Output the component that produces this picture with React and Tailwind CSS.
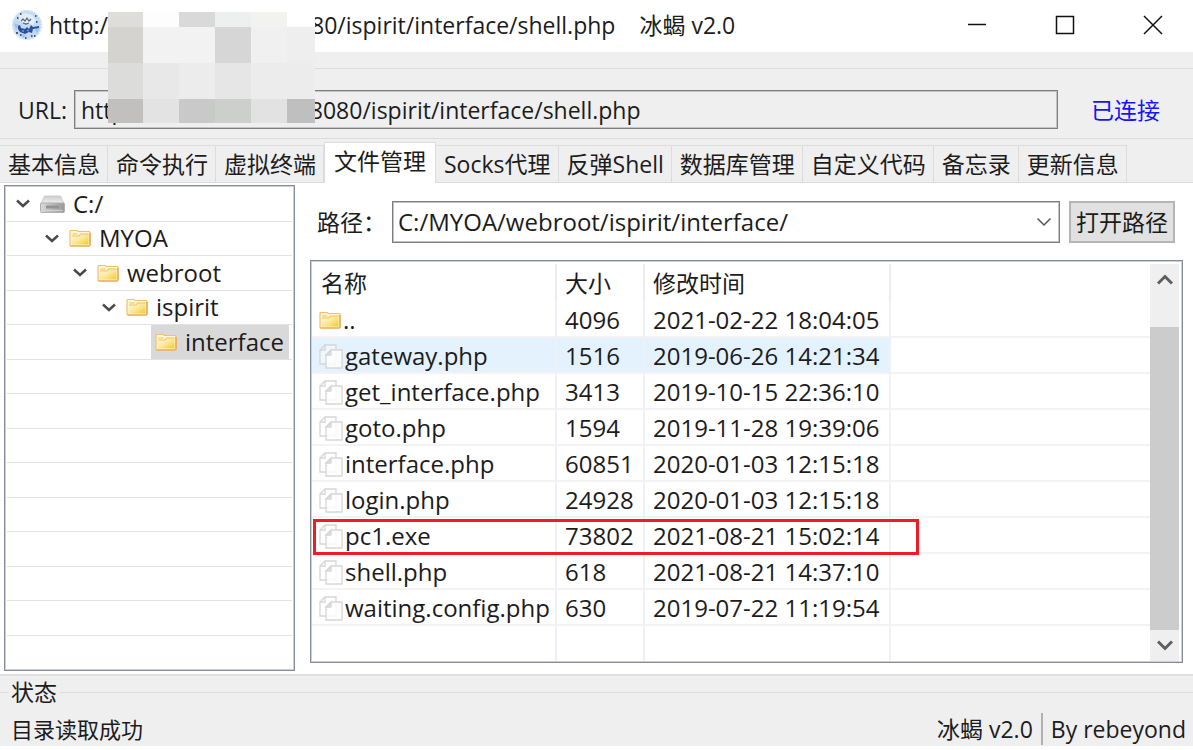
import React, { useState } from 'react';

const tabs = ['基本信息', '命令执行', '虚拟终端', '文件管理', 'Socks代理', '反弹Shell', '数据库管理', '自定义代码', '备忘录', '更新信息'];

const tree = [
  { name: 'C:/', pad: 'pl-[9px]', drive: true },
  { name: 'MYOA', pad: 'pl-[38px]' },
  { name: 'webroot', pad: 'pl-[66px]' },
  { name: 'ispirit', pad: 'pl-[95px]' },
  { name: 'interface', pad: 'pl-[144px]', selected: true },
  ...Array.from({ length: 9 }, () => null),
];

const files = [
  { name: '..', size: '4096', time: '2021-02-22 18:04:05', folder: true },
  { name: 'gateway.php', size: '1516', time: '2019-06-26 14:21:34', hover: true },
  { name: 'get_interface.php', size: '3413', time: '2019-10-15 22:36:10' },
  { name: 'goto.php', size: '1594', time: '2019-11-28 19:39:06' },
  { name: 'interface.php', size: '60851', time: '2020-01-03 12:15:18' },
  { name: 'login.php', size: '24928', time: '2020-01-03 12:15:18' },
  { name: 'pc1.exe', size: '73802', time: '2021-08-21 15:02:14', marked: true },
  { name: 'shell.php', size: '618', time: '2021-08-21 14:37:10' },
  { name: 'waiting.config.php', size: '630', time: '2019-07-22 11:19:54' },
];

const mosaic = [
  'bg-[#dedddb]', 'bg-[#fdfdfd]', 'bg-[#d9d9d9]', 'bg-[#edf0ee]', 'bg-[#f2f2f0]', 'bg-[#ffffff]',
  'bg-[#d4d3d0]', 'bg-[#f2f2f2]', 'bg-[#f2f2f2]', 'bg-[#d6d6d6]', 'bg-[#f0f0f0]', 'bg-[#eeeeee]',
  'bg-[#dcdcda]', 'bg-[#e8e8e8]', 'bg-[#ececec]', 'bg-[#e6e6e6]', 'bg-[#ececec]', 'bg-[#ececec]',
  'bg-[#c1c0be]', 'bg-[#e3e3e3]', 'bg-[#c9c9c9]', 'bg-[#cdcfcd]', 'bg-[#e2e2e2]', 'bg-[#bfbfbf]',
];

function FolderIcon() {
  return (
    <svg className="shrink-0" width="22" height="18" viewBox="0 0 22 18" aria-hidden="true">
      <defs>
        <linearGradient id="folder" x1="0" y1="0" x2="1" y2="1">
          <stop offset="0" stopColor="#fffbe6" />
          <stop offset="0.5" stopColor="#fbe89c" />
          <stop offset="1" stopColor="#efcb2c" />
        </linearGradient>
      </defs>
      <path d="M1 16V2.500Q1 1.500 2 1.500H8L9.500 2.500H20Q21 2.500 21 3.500V16Q21 17 20 17H2Q1 17 1 16Z" fill="#fff6d6" stroke="#f3c06a" strokeWidth="1.200" />
      <path d="M2.500 15.500V7.500H10L11.500 5H19.500V15.500Z" fill="url(#folder)" />
      <path d="M3.500 5H8.500M3 7H10L11.500 5H19.500" fill="none" stroke="#ecc35c" strokeWidth="1.200" />
      <path d="M1.500 17H20.500M21 4V16.500" stroke="#e6a04c" strokeWidth="1.200" />
    </svg>
  );
}

function DriveIcon() {
  return (
    <svg className="shrink-0" width="25" height="18" viewBox="0 0 25 18" aria-hidden="true">
      <defs>
        <linearGradient id="driveTop" x1="0" y1="0" x2="0" y2="1">
          <stop offset="0" stopColor="#cfcfcf" />
          <stop offset="1" stopColor="#efefef" />
        </linearGradient>
        <linearGradient id="driveFront" x1="0" y1="0" x2="1" y2="0">
          <stop offset="0" stopColor="#dadada" />
          <stop offset="1" stopColor="#989898" />
        </linearGradient>
      </defs>
      <path d="M4.500 1H20.500L24 8.500H1Z" fill="url(#driveTop)" stroke="#c4c4c4" strokeWidth="0.800" />
      <rect x="0.500" y="8" width="24" height="9.500" rx="1" fill="url(#driveFront)" stroke="#b0b0b0" />
      <rect x="6" y="10.500" width="13" height="3" fill="#939393" />
      <path d="M2 15.500H23" stroke="#cfcfcf" strokeWidth="1" />
    </svg>
  );
}

function FileIcon() {
  return (
    <svg className="shrink-0" width="24" height="25" viewBox="0 0 24 25" fill="#fff" fillOpacity="0.400" stroke="#d6d6d6" strokeWidth="1.300" aria-hidden="true">
      <path d="M1 20V6H6V1H17V20Z" />
      <path d="M1 6L6 1" />
      <path d="M7 24V11L12 6H23V24Z" fill="#fff" fillOpacity="0.800" />
      <path d="M7 11H12V6Z" fill="#dedede" fillOpacity="1" />
    </svg>
  );
}

function TreeChevron() {
  return (
    <svg className="mr-[10px] shrink-0" width="14" height="9" viewBox="0 0 14 9" fill="none" stroke="#4a4a4a" strokeWidth="2.400" aria-hidden="true">
      <path d="M1 1.500L7 7L13 1.500" />
    </svg>
  );
}

function AppLogo() {
  return (
    <svg className="shrink-0" width="32" height="32" viewBox="0 0 32 32" aria-hidden="true">
      <circle cx="16" cy="16" r="15" fill="#c3daf2" />
      <circle cx="16" cy="16" r="14.500" fill="none" stroke="#e4eff9" strokeWidth="1.500" strokeDasharray="2 1.500" />
      <path d="M8 6L14 4L21 6L25 11L22 16L14 14L8 12Z" fill="#e2edf8" />
      <path d="M3 14L8 16L5 21ZM24 20L29 18L26 25ZM10 25L15 26L12 29Z" fill="#9fc1e8" />
      <path d="M7 17L9 16L10 19L14 20L16 18L18 20L20 16L22 18L28 17V19L22 20L21 24L18 23L14 25L9 23L7 20Z" fill="#2b4f9c" />
      <path d="M10 12L12 10L14 12L16 9L18 12L20 10M12 14L15 15L18 14" stroke="#59647c" strokeWidth="1.200" fill="none" />
      <path d="M6 9H7.500M24 7H25.500M9 5H10.500M5 24H7M9 26H10.500M23 27H24.500M14 29H15.500M20 27H21.500M25 13H26.500" stroke="#24365c" strokeWidth="1.500" />
      <path d="M11 22H13M16 21.500H18" stroke="#6f96d2" strokeWidth="1.500" />
    </svg>
  );
}

export default function App() {
  const [active, setActive] = useState('文件管理');
  return (
    <div className="relative flex min-h-screen flex-col overflow-hidden bg-white font-['Open_Sans','Noto_Sans_CJK_SC',sans-serif] text-[23px] leading-8 text-[#1c1c1c]">
      <header className="flex h-[52px] shrink-0 items-center pb-[3px] pl-[11px] pr-[30px]">
        <AppLogo />
        <h1 className="ml-[6px] flex whitespace-pre">
          <span className="w-[262px]">http://</span>
          <span>80/ispirit/interface/shell.php</span>
          <span className="ml-6">冰蝎 v2.0</span>
        </h1>
        <div className="ml-auto flex items-center gap-[68px]">
          <button type="button" aria-label="最小化" className="flex h-8 w-5 items-center justify-center">
            <svg width="20" height="20" viewBox="0 0 20 20" stroke="#111" strokeWidth="1.500"><path d="M1 9.500H19" /></svg>
          </button>
          <button type="button" aria-label="最大化" className="flex h-8 w-5 items-center justify-center">
            <svg width="20" height="20" viewBox="0 0 20 20" fill="none" stroke="#111" strokeWidth="1.500"><rect x="1.500" y="1.500" width="17" height="17" /></svg>
          </button>
          <button type="button" aria-label="关闭" className="flex h-8 w-5 items-center justify-center">
            <svg width="20" height="20" viewBox="0 0 20 20" stroke="#111" strokeWidth="1.500"><path d="M1 1L19 19M19 1L1 19" /></svg>
          </button>
        </div>
      </header>

      <section className="bg-[#efefef] pt-4">
        <div className="flex items-center border-y border-[#dcdcdc] pb-[9px] pl-[18px] pr-[33px] pt-[21px]">
          <label htmlFor="url" className="w-14 shrink-0">URL:</label>
          <input id="url" readOnly value={'http://' + ' '.repeat(27) + '8080/ispirit/interface/shell.php'} className="h-[39px] min-w-0 flex-1 border border-[#7d7d7d] bg-[#efefef] pl-[6px] pr-1 shadow-[inset_0_0_0_1px_#c4c4c4] outline-none" />
          <a href="#status" className="ml-[33px] shrink-0 text-[#1414ff]">已连接</a>
        </div>
      </section>

      <nav className="flex h-11 shrink-0 items-end bg-[#efefef]" role="tablist">
        {tabs.map((t) => (
          <button
            key={t}
            type="button"
            role="tab"
            aria-selected={t === active}
            onClick={() => setActive(t)}
            className={
              t === active
                ? 'h-[41px] whitespace-nowrap border-x border-t border-[#dcdcdc] bg-white px-[9px] pb-1'
                : 'h-[38px] whitespace-nowrap border-y border-r border-[#dcdcdc] pl-2 pr-[7px]'
            }
          >
            {t}
          </button>
        ))}
        <span className="flex-1 self-stretch border-b border-[#dcdcdc]" />
      </nav>

      <main className="flex flex-1 pb-[3px] pl-1 pr-[10px] pt-[2px]">
        <ul className="flex w-[291px] shrink-0 flex-col border border-[#858b98] px-[2px] py-px text-[24px] shadow-[inset_0_0_0_1px_#cdd0d6]">
          {tree.map((n, i) => (
            <li key={i} className={'flex min-h-8 flex-1 items-center border-b border-[#e2e2e2] last:border-b-0 ' + (n ? n.pad : '')}>
              {n && !n.selected && <TreeChevron />}
              {n && (
                <button type="button" className={n.selected ? 'flex items-center gap-2 self-stretch bg-[#d9d9d9] pl-1 pr-[5px]' : 'flex items-center gap-2'}>
                  {n.drive ? <DriveIcon /> : <FolderIcon />}
                  {n.name}
                </button>
              )}
            </li>
          ))}
        </ul>

        <section className="ml-[15px] flex min-w-0 flex-1 flex-col pb-2 pt-4">
          <div className="flex items-center pl-[7px] pr-2">
            <label htmlFor="path" className="w-[75px] shrink-0">路径：</label>
            <div className="relative min-w-0 flex-1">
              <select id="path" className="h-[42px] w-full appearance-none border border-[#7d7d7d] bg-white px-[5px] text-[24px] shadow-[inset_0_0_0_1px_#c4c4c4] outline-none">
                <option>C:/MYOA/webroot/ispirit/interface/</option>
              </select>
              <svg className="pointer-events-none absolute right-2 top-4" width="16" height="10" viewBox="0 0 16 10" fill="none" stroke="#555" strokeWidth="1.500" aria-hidden="true"><path d="M1.500 1.500L8 8L14.500 1.500" /></svg>
            </div>
            <button type="button" className="ml-[9px] h-[42px] shrink-0 border-2 border-[#b5b5b5] bg-[#e1e1e1] px-[5px]">打开路径</button>
          </div>

          <div className="mt-[17px] flex flex-1 border border-[#858b98] px-px pb-px pt-[3px] shadow-[inset_0_0_0_1px_#cdd0d6]">
            <div className="flex min-w-0 flex-1 flex-col">
              <table className="w-full table-fixed border-collapse text-left text-[24px]">
                <thead className="text-[23px]">
                  <tr className="h-[37px]">
                    <th scope="col" className="w-[244px] border-r-2 border-[#ececec] pl-[9px] font-normal">名称</th>
                    <th scope="col" className="w-[88px] border-r-2 border-[#ececec] pl-2 font-normal">大小</th>
                    <th scope="col" className="w-[246px] border-r-2 border-[#ececec] pl-2 font-normal">修改时间</th>
                    <td />
                  </tr>
                </thead>
                <tbody>
                  {files.map((f) => (
                    <tr key={f.name} className="relative h-9 border-b-2 border-[#f3f3f3]">
                      <td className={'border-r-2 border-[#edf2f8] p-0 pl-[7px] pt-[2px] ' + (f.hover ? 'bg-[#e4f2fe]' : '')}>
                        <span className="flex items-center gap-[2px] whitespace-nowrap">
                          {f.folder ? <FolderIcon /> : <FileIcon />}
                          {f.name}
                        </span>
                        {f.marked && <span className="absolute left-px top-[2px] h-9 w-[606px] border-[3px] border-[#ee1c25]" />}
                      </td>
                      <td className={'border-r-2 border-[#edf2f8] p-0 pl-2 pt-[2px] ' + (f.hover ? 'bg-[#e4f2fe]' : '')}>{f.size}</td>
                      <td className={'whitespace-nowrap border-r-2 border-[#edf2f8] p-0 pl-2 pt-[2px] ' + (f.hover ? 'bg-[#e4f2fe]' : '')}>{f.time}</td>
                      <td />
                    </tr>
                  ))}
                </tbody>
              </table>
              <div className="flex flex-1" aria-hidden="true">
                <span className="w-[245px] border-r-2 border-[#edf2f8]" />
                <span className="w-[88px] border-r-2 border-[#edf2f8]" />
                <span className="w-[246px] border-r-2 border-[#edf2f8]" />
              </div>
            </div>
            <div className="mr-[2px] flex w-[29px] shrink-0 flex-col items-center bg-[#efefef]">
              <button type="button" aria-label="向上滚动" className="flex h-[31px] w-full items-center justify-center">
                <svg width="16" height="11" viewBox="0 0 16 11" fill="none" stroke="#5e5e5e" strokeWidth="3"><path d="M1 9.500L8 2.500L15 9.500" /></svg>
              </button>
              <div className="mt-8 w-full flex-1 bg-[#cccccc]" />
              <button type="button" aria-label="向下滚动" className="flex h-[31px] w-full items-center justify-center">
                <svg width="16" height="11" viewBox="0 0 16 11" fill="none" stroke="#5e5e5e" strokeWidth="3"><path d="M1 1.500L8 8.500L15 1.500" /></svg>
              </button>
            </div>
          </div>
        </section>
      </main>

      <footer id="status" className="mb-1 shrink-0 border-t-2 border-[#dedede] bg-[#efefef]">
        <div className="flex items-center">
          <span className="w-2 border-t border-[#dcdcdc]" />
          <span className="px-[3px]">状态</span>
          <span className="flex-1 border-t border-[#dcdcdc]" />
        </div>
        <div className="flex items-end pb-px pl-[11px] pr-[7px] pt-[5px]">
          <span className="text-[22px]">目录读取成功</span>
          <span className="ml-auto border-r-2 border-[#b0b0b0] pr-2">冰蝎 v2.0</span>
          <span className="pl-2">By rebeyond</span>
        </div>
      </footer>

      <div aria-hidden="true" className="absolute left-[108px] top-3 grid grid-cols-[35px_36px_36px_36px_36px_28px] grid-rows-[15px_36px_36px_24px]">
        {mosaic.map((c, i) => <span key={i} className={c} />)}
      </div>
    </div>
  );
}
